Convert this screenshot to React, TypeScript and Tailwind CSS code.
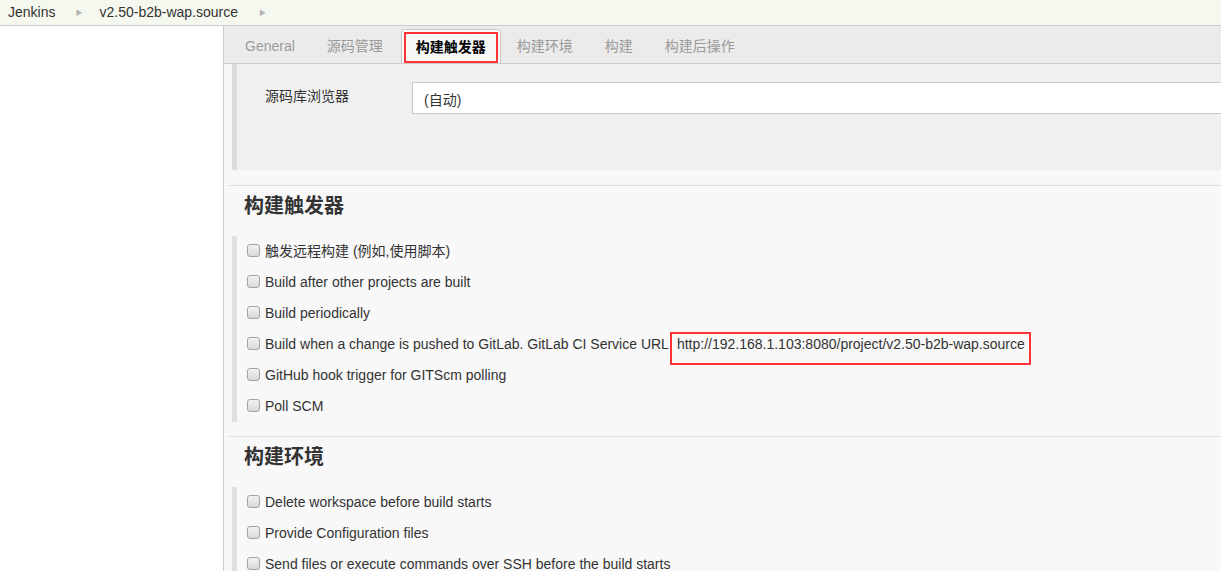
const font = { fontFamily: '"Liberation Sans", Arial, "Noto Sans CJK SC", sans-serif' }

function Arrow() {
  return <span className="text-[7px] leading-none text-[#b5b5b5]">▶</span>
}

function Checkbox() {
  return (
    <span className="inline-block h-[13px] w-[13px] shrink-0 rounded-[3px] border border-[#a3a3a3] bg-linear-to-b from-[#f3f3f3] to-[#d8d8d8]" />
  )
}

function Item({ children }: { children: React.ReactNode }) {
  return (
    <div className="flex h-[31px] items-center">
      <span className="-mt-[2px] ml-[10px] mr-[5px] flex">
        <Checkbox />
      </span>
      <span className="flex items-center text-[14px] text-[#333]">{children}</span>
    </div>
  )
}

function Section({ title, top, children }: { title: string; top: string; children: React.ReactNode }) {
  return (
    <div className={top}>
      <div className="ml-[5px] border-t border-[#dcdcdc]" />
      <h3 className="ml-[20px] mt-[5px] h-[30px] text-[20px] font-bold leading-[30px] text-[#333]">{title}</h3>
      <div className="ml-[8px] mt-[15px] border-l-[5px] border-[#e0e0e0]">{children}</div>
    </div>
  )
}

const tabs = ["General", "源码管理", "构建触发器", "构建环境", "构建", "构建后操作"]

export default function App() {
  return (
    <div className="flex h-[571px] w-[1221px] flex-col overflow-hidden bg-white" style={font}>
      <div className="flex h-[26px] shrink-0 items-center border-b border-[#cccccc] bg-[#f5f8ef] text-[14px] text-[#333]">
        <span className="pl-[8px]">Jenkins</span>
        <span className="ml-[20px] mr-[17px] flex"><Arrow /></span>
        <span>v2.50-b2b-wap.source</span>
        <span className="ml-[21px] flex"><Arrow /></span>
      </div>
      <div className="flex flex-1">
        <div className="w-[224px] shrink-0 border-r border-[#cccccc] bg-white" />
        <div className="flex-1 bg-[#f8f8f8]">
          <div className="flex h-[38px] items-end border-b border-[#cccccc] bg-[#ebebeb] pl-[5px] text-[14px]">
            {tabs.map((t) =>
              t === "构建触发器" ? (
                <div key={t} className="ml-[2px] h-[34px] rounded-t-[4px] border border-b-0 border-[#c8c8c8] bg-[#f8f8f8] px-[2px] pt-[2px]">
                  <div className="flex h-full items-center border-2 border-[#f33] px-[10px] font-bold text-black">{t}</div>
                </div>
              ) : (
                <div key={t} className="flex h-full items-center px-[16px] pt-[3px] text-[#9a9a9a]">{t}</div>
              ),
            )}
          </div>
          <div className="ml-[8px] flex h-[106px] border-l-[5px] border-[#dcdcdc] bg-[#f0f0f0] pt-[18px]">
            <span className="ml-[28px] mt-[4px] w-[147px] text-[14px] text-[#333]">源码库浏览器</span>
            <div className="flex h-[32px] flex-1 items-center border border-r-0 border-[#c8c8c8] bg-white pl-[11px] pt-[4px] text-[14px] text-[#333]">
              (自动)
            </div>
          </div>
          <Section title="构建触发器" top="mt-[15px]">
            <Item>触发远程构建 (例如,使用脚本)</Item>
            <Item>Build after other projects are built</Item>
            <Item>Build periodically</Item>
            <Item>
              Build when a change is pushed to GitLab. GitLab CI Service URL
              <span className="ml-[1px] mt-[8px] flex h-[33px] items-center border-2 border-[#f33] pb-[8px] pl-[5px] pr-[4px]">
                http://192.168.1.103:8080/project/v2.50-b2b-wap.source
              </span>
            </Item>
            <Item>GitHub hook trigger for GITScm polling</Item>
            <Item>Poll SCM</Item>
          </Section>
          <Section title="构建环境" top="mt-[14px]">
            <Item>Delete workspace before build starts</Item>
            <Item>Provide Configuration files</Item>
            <Item>Send files or execute commands over SSH before the build starts</Item>
          </Section>
        </div>
      </div>
    </div>
  )
}
